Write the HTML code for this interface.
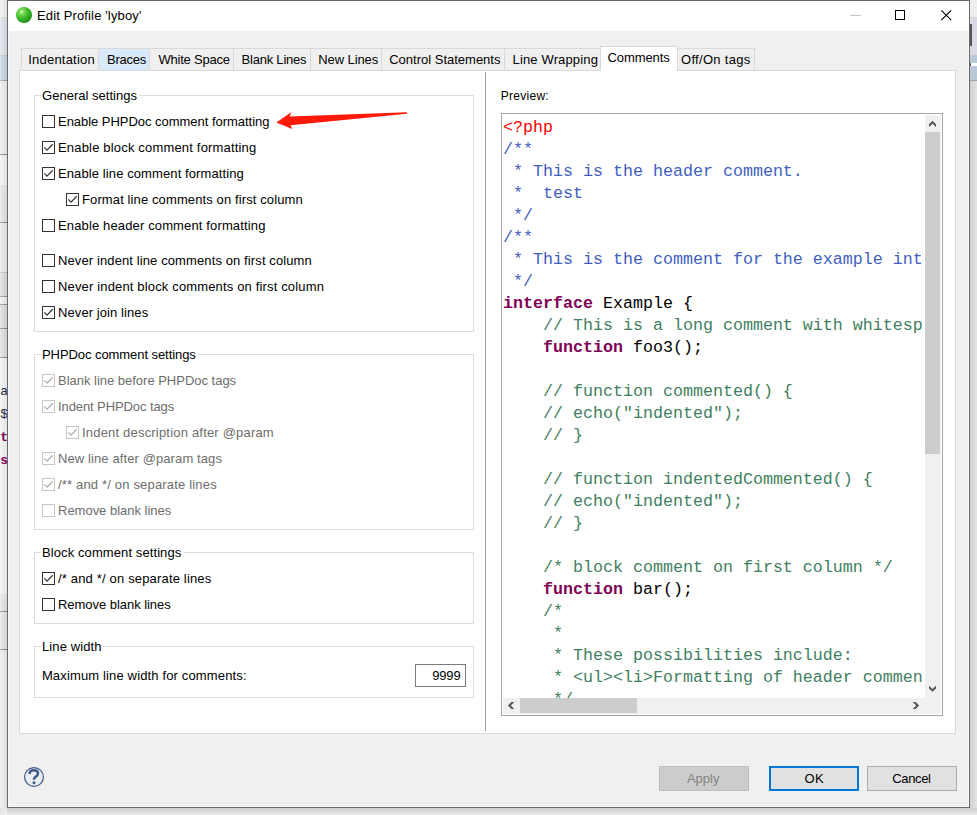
<!DOCTYPE html>
<html><head><meta charset="utf-8"><style>
*{margin:0;padding:0;box-sizing:border-box}
html,body{width:977px;height:815px;overflow:hidden;background:#efefef}
body{position:relative;font-family:"Liberation Sans",sans-serif;font-size:13px;color:#000}
.a{position:absolute}
.t{position:absolute;white-space:pre;line-height:15px;font-size:13px}
.win{position:absolute;left:7px;top:0;width:963px;height:808px;border:1px solid #6a6a6a;background:#f0f0f0;box-shadow:inset 1px 0 0 #f8f8f8,inset -1px -1px 0 #f8f8f8}
.title{position:absolute;left:8px;top:1px;width:961px;height:30px;background:#fff}
.tab{position:absolute;top:48px;height:23px;border:1px solid #d9d9d9;border-bottom:none;background:#f0f0f0}
.panel{position:absolute;left:19px;top:70px;width:937px;height:664px;background:#fff;border:1px solid #d9d9d9}
.grp{position:absolute;left:34px;width:440px;border:1px solid #dcdcdc}
.gap{position:absolute;background:#fff;height:3px}
.cb{position:absolute;width:13px;height:13px}
.dis{color:#6d6d6d}
.code{position:absolute;font-family:"Liberation Mono",monospace;font-size:16.67px;line-height:22px;white-space:pre;color:#000}
.r{color:#f00}.pd{color:#3f5fbf}.cm{color:#3f7f5f}.kw{color:#7f0055;font-weight:bold}
.btn{position:absolute;top:766px;width:90px;height:25px;border:1px solid #adadad;background:#e1e1e1}
</style></head><body>
<div class="a" style="left:0;top:0px;width:7px;height:17px;background:linear-gradient(to right,rgba(255,255,255,0.35),rgba(0,0,0,0.06)),#eeeeee"></div>
<div class="a" style="left:0;top:17px;width:7px;height:1px;background:linear-gradient(to right,rgba(255,255,255,0.35),rgba(0,0,0,0.06)),#d9d9d9"></div>
<div class="a" style="left:0;top:18px;width:7px;height:37px;background:linear-gradient(to right,rgba(255,255,255,0.35),rgba(0,0,0,0.06)),#dcdfe9"></div>
<div class="a" style="left:0;top:55px;width:7px;height:1px;background:linear-gradient(to right,rgba(255,255,255,0.35),rgba(0,0,0,0.06)),#c9c5c0"></div>
<div class="a" style="left:0;top:56px;width:7px;height:24px;background:linear-gradient(to right,rgba(255,255,255,0.35),rgba(0,0,0,0.06)),#c2d3df"></div>
<div class="a" style="left:0;top:80px;width:7px;height:1px;background:linear-gradient(to right,rgba(255,255,255,0.35),rgba(0,0,0,0.06)),#97a2ad"></div>
<div class="a" style="left:0;top:81px;width:7px;height:73px;background:linear-gradient(to right,rgba(255,255,255,0.35),rgba(0,0,0,0.06)),#ebebeb"></div>
<div class="a" style="left:0;top:154px;width:7px;height:1px;background:linear-gradient(to right,rgba(255,255,255,0.35),rgba(0,0,0,0.06)),#7c7c7c"></div>
<div class="a" style="left:0;top:155px;width:7px;height:30px;background:linear-gradient(to right,rgba(255,255,255,0.35),rgba(0,0,0,0.06)),#f0f0f0"></div>
<div class="a" style="left:0;top:185px;width:7px;height:37px;background:linear-gradient(to right,rgba(255,255,255,0.35),rgba(0,0,0,0.06)),#e2e2e2"></div>
<div class="a" style="left:0;top:222px;width:7px;height:1px;background:linear-gradient(to right,rgba(255,255,255,0.35),rgba(0,0,0,0.06)),#7a7a7a"></div>
<div class="a" style="left:0;top:223px;width:7px;height:49px;background:linear-gradient(to right,rgba(255,255,255,0.35),rgba(0,0,0,0.06)),#e7e7e7"></div>
<div class="a" style="left:0;top:272px;width:7px;height:1px;background:linear-gradient(to right,rgba(255,255,255,0.35),rgba(0,0,0,0.06)),#bdbdbd"></div>
<div class="a" style="left:0;top:273px;width:7px;height:23px;background:linear-gradient(to right,rgba(255,255,255,0.35),rgba(0,0,0,0.06)),#d9d9d9"></div>
<div class="a" style="left:0;top:296px;width:7px;height:1px;background:linear-gradient(to right,rgba(255,255,255,0.35),rgba(0,0,0,0.06)),#8a8a8a"></div>
<div class="a" style="left:0;top:297px;width:7px;height:7px;background:linear-gradient(to right,rgba(255,255,255,0.35),rgba(0,0,0,0.06)),#ececec"></div>
<div class="a" style="left:0;top:304px;width:7px;height:1px;background:linear-gradient(to right,rgba(255,255,255,0.35),rgba(0,0,0,0.06)),#8a8a8a"></div>
<div class="a" style="left:0;top:305px;width:7px;height:23px;background:linear-gradient(to right,rgba(255,255,255,0.35),rgba(0,0,0,0.06)),#d9d9d9"></div>
<div class="a" style="left:0;top:328px;width:7px;height:1px;background:linear-gradient(to right,rgba(255,255,255,0.35),rgba(0,0,0,0.06)),#7a7a7a"></div>
<div class="a" style="left:0;top:329px;width:7px;height:28px;background:linear-gradient(to right,rgba(255,255,255,0.35),rgba(0,0,0,0.06)),#dadada"></div>
<div class="a" style="left:0;top:357px;width:7px;height:1px;background:linear-gradient(to right,rgba(255,255,255,0.35),rgba(0,0,0,0.06)),#7c7c7c"></div>
<div class="a" style="left:0;top:358px;width:7px;height:236px;background:linear-gradient(to right,rgba(255,255,255,0.35),rgba(0,0,0,0.06)),#f1f1f1"></div>
<div class="a" style="left:0;top:594px;width:7px;height:17px;background:linear-gradient(to right,rgba(255,255,255,0.35),rgba(0,0,0,0.06)),#e2e2e2"></div>
<div class="a" style="left:0;top:611px;width:7px;height:1px;background:linear-gradient(to right,rgba(255,255,255,0.35),rgba(0,0,0,0.06)),#7a7a7a"></div>
<div class="a" style="left:0;top:612px;width:7px;height:37px;background:linear-gradient(to right,rgba(255,255,255,0.35),rgba(0,0,0,0.06)),#e2e2e2"></div>
<div class="a" style="left:0;top:649px;width:7px;height:1px;background:linear-gradient(to right,rgba(255,255,255,0.35),rgba(0,0,0,0.06)),#7a7a7a"></div>
<div class="a" style="left:0;top:650px;width:7px;height:165px;background:linear-gradient(to right,rgba(255,255,255,0.35),rgba(0,0,0,0.06)),#ebebeb"></div>
<div class="a" style="left:0;top:380px;width:7px;height:100px;overflow:hidden"><div style="position:absolute;right:0;top:0;font-family:'Liberation Mono',monospace;font-size:13px;line-height:23px;white-space:pre;text-align:right;margin-right:-1px"><div style="color:#1a2a50">ka</div><div style="color:#1a2a50">$</div><div style="color:#7f0055;font-weight:bold">ct</div><div style="color:#7f0055;font-weight:bold">s</div></div></div>
<div class="a" style="left:970px;top:0px;width:7px;height:17px;background:#eeeeee"></div>
<div class="a" style="left:970px;top:17px;width:7px;height:1px;background:#d9d9d9"></div>
<div class="a" style="left:970px;top:18px;width:7px;height:37px;background:#d9dae3"></div>
<div class="a" style="left:970px;top:55px;width:7px;height:1px;background:#c9c5c0"></div>
<div class="a" style="left:970px;top:56px;width:7px;height:24px;background:#b9c9d7"></div>
<div class="a" style="left:970px;top:80px;width:7px;height:1px;background:#97a2ad"></div>
<div class="a" style="left:970px;top:81px;width:7px;height:734px;background:linear-gradient(to right,#cfcfcf,#e3e3e3)"></div>
<div class="a" style="left:970px;top:24px;width:2px;height:22px;background:#555"></div>
<div class="a" style="left:970px;top:63px;width:7px;height:3px;background:#fff;border-left:1px solid #555"></div>
<div class="a" style="left:0;top:808px;width:977px;height:7px;background:linear-gradient(to bottom,#cdcdcd,#ebebeb)"></div>
<div class="a" style="left:0;top:808px;width:7px;height:7px;background:linear-gradient(to bottom right,#e0e0e0,#f2f2f2)"></div>
<div class="win"></div><div class="title"></div>
<svg class="a" style="left:16px;top:7px" width="16" height="16" viewBox="0 0 16 16">
<defs><radialGradient id="g1" cx="0.35" cy="0.3" r="0.75"><stop offset="0" stop-color="#e8ffe0"/><stop offset="0.18" stop-color="#7edc5a"/><stop offset="0.55" stop-color="#3bb82a"/><stop offset="1" stop-color="#1e8a12"/></radialGradient></defs>
<circle cx="8" cy="8" r="8" fill="url(#g1)"/></svg>
<div class="t" style="left:37.00px;top:8px;letter-spacing:0.137px;">Edit Profile 'lyboy'</div>
<div class="a" style="left:850px;top:15px;width:11px;height:1px;background:#c4c4c4"></div>
<div class="a" style="left:895px;top:10px;width:10px;height:10px;border:1px solid #000"></div>
<svg class="a" style="left:940px;top:9px" width="13" height="13" viewBox="0 0 13 13"><path d="M1.3 1.3L11.2 11.2M11.2 1.3L1.3 11.2" stroke="#000" stroke-width="1.1"/></svg>
<div class="tab" style="left:21px;width:78px;"></div>
<div class="tab" style="left:98px;width:52px;background:#d8eaf9;"></div>
<div class="tab" style="left:149px;width:85px;"></div>
<div class="tab" style="left:233px;width:78px;"></div>
<div class="tab" style="left:310px;width:72px;"></div>
<div class="tab" style="left:381px;width:124px;"></div>
<div class="tab" style="left:504px;width:97px;"></div>
<div class="tab" style="left:677px;width:78px;"></div>
<div class="t" style="left:28.30px;top:52px;letter-spacing:0.200px;">Indentation</div>
<div class="t" style="left:107.00px;top:52px;letter-spacing:-0.260px;">Braces</div>
<div class="t" style="left:158.50px;top:52px;letter-spacing:-0.230px;">White Space</div>
<div class="t" style="left:241.50px;top:52px;letter-spacing:-0.210px;">Blank Lines</div>
<div class="t" style="left:318.30px;top:52px;letter-spacing:-0.100px;">New Lines</div>
<div class="t" style="left:389.20px;top:52px;">Control Statements</div>
<div class="t" style="left:512.50px;top:52px;letter-spacing:0.150px;">Line Wrapping</div>
<div class="t" style="left:681.00px;top:52px;letter-spacing:0.300px;">Off/On tags</div>
<div class="panel"></div>
<div class="tab" style="left:600px;top:46px;width:78px;height:25px;background:#fff"></div>
<div class="t" style="left:607.40px;top:50px;letter-spacing:-0.057px;">Comments</div>
<div class="grp" style="top:95px;height:237px"></div>
<div class="gap" style="left:41px;top:94px;width:98px"></div>
<div class="t" style="left:42.00px;top:88px;letter-spacing:0.020px;">General settings</div>
<svg class="cb" style="left:42px;top:115px" width="13" height="13" viewBox="0 0 13 13"><rect x="0.5" y="0.5" width="12" height="12" fill="#fff" stroke="#333333"/></svg>
<div class="t" style="left:58.00px;top:114px;letter-spacing:-0.032px;">Enable PHPDoc comment formatting</div>
<svg class="cb" style="left:42px;top:141px" width="13" height="13" viewBox="0 0 13 13"><rect x="0.5" y="0.5" width="12" height="12" fill="#fff" stroke="#333333"/><polyline points="2.3,6.4 5,9.1 10.7,3.3" fill="none" stroke="#333333" stroke-width="1.25"/></svg>
<div class="t" style="left:58.00px;top:140px;letter-spacing:0.177px;">Enable block comment formatting</div>
<svg class="cb" style="left:42px;top:167px" width="13" height="13" viewBox="0 0 13 13"><rect x="0.5" y="0.5" width="12" height="12" fill="#fff" stroke="#333333"/><polyline points="2.3,6.4 5,9.1 10.7,3.3" fill="none" stroke="#333333" stroke-width="1.25"/></svg>
<div class="t" style="left:58.00px;top:166px;letter-spacing:0.103px;">Enable line comment formatting</div>
<svg class="cb" style="left:66px;top:193px" width="13" height="13" viewBox="0 0 13 13"><rect x="0.5" y="0.5" width="12" height="12" fill="#fff" stroke="#333333"/><polyline points="2.3,6.4 5,9.1 10.7,3.3" fill="none" stroke="#333333" stroke-width="1.25"/></svg>
<div class="t" style="left:82.00px;top:192px;letter-spacing:0.114px;">Format line comments on first column</div>
<svg class="cb" style="left:42px;top:219px" width="13" height="13" viewBox="0 0 13 13"><rect x="0.5" y="0.5" width="12" height="12" fill="#fff" stroke="#333333"/></svg>
<div class="t" style="left:58.00px;top:218px;letter-spacing:0.139px;">Enable header comment formatting</div>
<svg class="cb" style="left:42px;top:254px" width="13" height="13" viewBox="0 0 13 13"><rect x="0.5" y="0.5" width="12" height="12" fill="#fff" stroke="#333333"/></svg>
<div class="t" style="left:58.00px;top:253px;letter-spacing:0.110px;">Never indent line comments on first column</div>
<svg class="cb" style="left:42px;top:280px" width="13" height="13" viewBox="0 0 13 13"><rect x="0.5" y="0.5" width="12" height="12" fill="#fff" stroke="#333333"/></svg>
<div class="t" style="left:58.00px;top:279px;letter-spacing:0.155px;">Never indent block comments on first column</div>
<svg class="cb" style="left:42px;top:306px" width="13" height="13" viewBox="0 0 13 13"><rect x="0.5" y="0.5" width="12" height="12" fill="#fff" stroke="#333333"/><polyline points="2.3,6.4 5,9.1 10.7,3.3" fill="none" stroke="#333333" stroke-width="1.25"/></svg>
<div class="t" style="left:58.00px;top:305px;letter-spacing:0.087px;">Never join lines</div>
<div class="grp" style="top:354px;height:176px"></div>
<div class="gap" style="left:41px;top:353px;width:157px"></div>
<div class="t" style="left:42.00px;top:347px;letter-spacing:-0.068px;">PHPDoc comment settings</div>
<svg class="cb" style="left:42px;top:374px" width="13" height="13" viewBox="0 0 13 13"><rect x="0.5" y="0.5" width="12" height="12" fill="#fff" stroke="#c6c6c6"/><polyline points="2.3,6.4 5,9.1 10.7,3.3" fill="none" stroke="#adadad" stroke-width="1.25"/></svg>
<div class="t dis" style="left:58.00px;top:373px;letter-spacing:-0.014px;">Blank line before PHPDoc tags</div>
<svg class="cb" style="left:42px;top:400px" width="13" height="13" viewBox="0 0 13 13"><rect x="0.5" y="0.5" width="12" height="12" fill="#fff" stroke="#c6c6c6"/><polyline points="2.3,6.4 5,9.1 10.7,3.3" fill="none" stroke="#adadad" stroke-width="1.25"/></svg>
<div class="t dis" style="left:58.00px;top:399px;letter-spacing:-0.094px;">Indent PHPDoc tags</div>
<svg class="cb" style="left:66px;top:426px" width="13" height="13" viewBox="0 0 13 13"><rect x="0.5" y="0.5" width="12" height="12" fill="#fff" stroke="#c6c6c6"/><polyline points="2.3,6.4 5,9.1 10.7,3.3" fill="none" stroke="#adadad" stroke-width="1.25"/></svg>
<div class="t dis" style="left:82.00px;top:425px;letter-spacing:0.193px;">Indent description after @param</div>
<svg class="cb" style="left:42px;top:452px" width="13" height="13" viewBox="0 0 13 13"><rect x="0.5" y="0.5" width="12" height="12" fill="#fff" stroke="#c6c6c6"/><polyline points="2.3,6.4 5,9.1 10.7,3.3" fill="none" stroke="#adadad" stroke-width="1.25"/></svg>
<div class="t dis" style="left:58.00px;top:451px;letter-spacing:0.104px;">New line after @param tags</div>
<svg class="cb" style="left:42px;top:478px" width="13" height="13" viewBox="0 0 13 13"><rect x="0.5" y="0.5" width="12" height="12" fill="#fff" stroke="#c6c6c6"/><polyline points="2.3,6.4 5,9.1 10.7,3.3" fill="none" stroke="#adadad" stroke-width="1.25"/></svg>
<div class="t dis" style="left:58.00px;top:477px;letter-spacing:0.174px;">/** and */ on separate lines</div>
<svg class="cb" style="left:42px;top:504px" width="13" height="13" viewBox="0 0 13 13"><rect x="0.5" y="0.5" width="12" height="12" fill="#fff" stroke="#c6c6c6"/></svg>
<div class="t dis" style="left:58.00px;top:503px;letter-spacing:-0.012px;">Remove blank lines</div>
<div class="grp" style="top:552px;height:72px"></div>
<div class="gap" style="left:41px;top:551px;width:143px"></div>
<div class="t" style="left:42.00px;top:545px;letter-spacing:0.095px;">Block comment settings</div>
<svg class="cb" style="left:42px;top:572px" width="13" height="13" viewBox="0 0 13 13"><rect x="0.5" y="0.5" width="12" height="12" fill="#fff" stroke="#333333"/><polyline points="2.3,6.4 5,9.1 10.7,3.3" fill="none" stroke="#333333" stroke-width="1.25"/></svg>
<div class="t" style="left:58.00px;top:571px;letter-spacing:0.169px;">/* and */ on separate lines</div>
<svg class="cb" style="left:42px;top:598px" width="13" height="13" viewBox="0 0 13 13"><rect x="0.5" y="0.5" width="12" height="12" fill="#fff" stroke="#333333"/></svg>
<div class="t" style="left:58.00px;top:597px;letter-spacing:-0.041px;">Remove blank lines</div>
<div class="grp" style="top:646px;height:52px"></div>
<div class="gap" style="left:41px;top:645px;width:62px"></div>
<div class="t" style="left:42.00px;top:639px;letter-spacing:0.111px;">Line width</div>
<div class="t" style="left:41.90px;top:668px;letter-spacing:0.148px;">Maximum line width for comments:</div>
<div class="a" style="left:415px;top:664px;width:51px;height:23px;border:1px solid #7a7a7a;background:#fff"></div>
<div class="t" style="left:432.30px;top:668px;letter-spacing:-0.200px;">9999</div>
<svg class="a" style="left:0;top:0" width="977" height="815"><polygon points="276.4,122.5 291.5,111.9 289.5,116.6 407,112.3 407,113.8 290.5,125.2 292.2,129" fill="#ff1a0a"/></svg>
<div class="a" style="left:485px;top:72px;width:1px;height:659px;background:#a0a0a0"></div>
<div class="t" style="left:500.8px;top:89px;font-size:12px;letter-spacing:0.27px">Preview:</div>
<div class="a" style="left:501px;top:113px;width:442px;height:603px;border:1px solid #a3a6ad;background:#fff"></div>
<div class="a" style="left:502px;top:114px;width:421px;height:584px;overflow:hidden"><div class="code" style="left:1px;top:3px"><span class="r">&lt;?php</span>
<span class="pd">/**</span>
<span class="pd"> * This is the header comment.</span>
<span class="pd"> *  test</span>
<span class="pd"> */</span>
<span class="pd">/**</span>
<span class="pd"> * This is the comment for the example interface.</span>
<span class="pd"> */</span>
<span class="kw">interface</span> Example {
    <span class="cm">// This is a long comment with whitespace</span>
    <span class="kw">function</span> foo3();

    <span class="cm">// function commented() {</span>
    <span class="cm">// echo("indented");</span>
    <span class="cm">// }</span>

    <span class="cm">// function indentedCommented() {</span>
    <span class="cm">// echo("indented");</span>
    <span class="cm">// }</span>

    <span class="cm">/* block comment on first column */</span>
    <span class="kw">function</span> bar();
    <span class="cm">/*</span>
    <span class="cm"> *</span>
    <span class="cm"> * These possibilities include:</span>
    <span class="cm"> * &lt;ul&gt;&lt;li&gt;Formatting of header comments</span>
    <span class="cm"> */</span></div></div>
<div class="a" style="left:925px;top:115px;width:16px;height:599px;background:#f0f0f0"></div>
<div class="a" style="left:925px;top:132px;width:15px;height:322px;background:#cdcdcd"></div>
<div class="a" style="left:503px;top:698px;width:422px;height:16px;background:#f0f0f0"></div>
<div class="a" style="left:520px;top:698px;width:117px;height:15px;background:#cdcdcd"></div>
<svg class="a" style="left:0;top:0" width="977" height="815" fill="#555"><polygon points="929,124.3 932.5,120.7 936,124.3 936,127 932.5,123.7 929,127"/><polygon points="929,685.8 932.5,689 936,685.8 936,688.6 932.5,691.8 929,688.6"/><polygon points="514.3,702 511.4,702 507.9,705.5 511.4,709 514.3,709 510.8,705.5"/><polygon points="912.7,702 915.6,702 919.1,705.5 915.6,709 912.7,709 916.2,705.5"/></svg>
<svg class="a" style="left:24px;top:767px" width="20" height="20" viewBox="0 0 20 20">
<circle cx="10" cy="10" r="9.4" fill="#ebedf0" stroke="#405a86" stroke-width="1.2"/>
<path d="M5.6,6.9 C5.6,4.2 7.5,3.3 9.8,3.3 C12.3,3.3 14,4.6 14,6.6 C14,8.6 12.2,9.4 11,10.4 C10.2,11.1 9.9,11.7 9.9,12.8" fill="none" stroke="#405a86" stroke-width="2.5"/>
<circle cx="10" cy="15.7" r="1.5" fill="#405a86"/></svg>
<div class="btn" style="left:659px;background:#cccccc;border-color:#bfbfbf"></div>
<div class="btn" style="left:769px;border:2px solid #0078d7"></div>
<div class="btn" style="left:867px"></div>
<div class="t" style="left:686.90px;top:771px;letter-spacing:0.025px;color:#838383;">Apply</div>
<div class="t" style="left:804.50px;top:771px;letter-spacing:0.400px;">OK</div>
<div class="t" style="left:892.20px;top:771px;letter-spacing:-0.340px;">Cancel</div>
</body></html>
